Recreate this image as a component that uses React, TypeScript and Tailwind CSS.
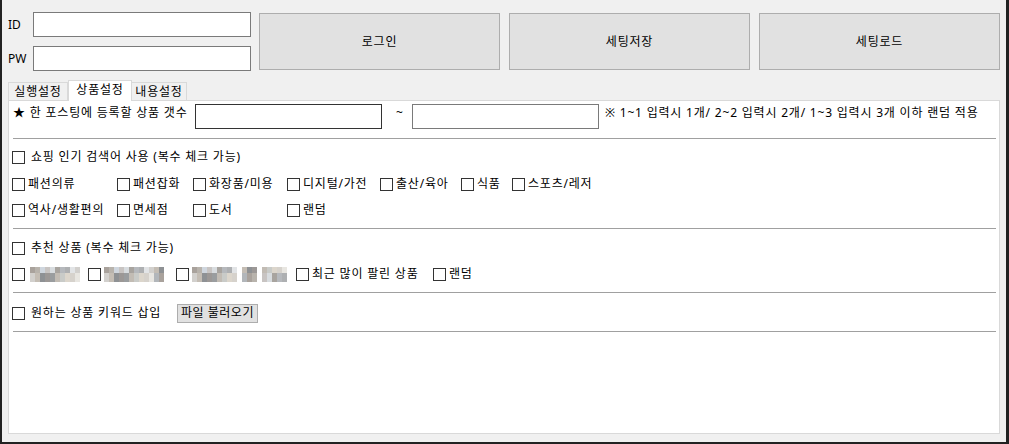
import React from 'react';

const FONT = { fontFamily: '"Noto Sans", "Noto Sans CJK KR", sans-serif' };

// checkbox + label used throughout the product settings tab
function Check({ label, width, gap = 'ml-[3px]' }: { label: React.ReactNode; width?: string; gap?: string }) {
  return (
    <div className={`flex items-center h-[20px] shrink-0 ${width ?? ''}`}>
      <div className="w-[13px] h-[13px] border border-[#333333] bg-white shrink-0" />
      <span className={`${gap} text-[12px] leading-none tracking-[0.8px] text-black whitespace-nowrap`}>{label}</span>
    </div>
  );
}

// pixelated blur of hidden product names
const mosaicShades = [
  '#a9a29c', '#c8c4c2', '#b6b9bd', '#d2d0cd', '#9c9896', '#c9cbc8', '#e8e6e1', '#b8b3ac', '#d8dcdf', '#aeb0b2',
  '#c4bdb4', '#9a9d9f', '#dcd6cc', '#b2b6ba', '#cfd6de', '#a8a49f', '#e2e4e6', '#8e9194', '#c2bcb4', '#d6d2cc',
];

function Mosaic({ cols, gaps = [] }: { cols: number; gaps?: number[] }) {
  return (
    <div className="flex flex-col">
      {[0, 1].map((r) => (
        <div key={r} className="flex">
          {Array.from({ length: cols }).map((_, i) => (
            <div
              key={i}
              className={r === 0 ? 'w-[5px] h-[6px]' : 'w-[5px] h-[9px]'}
              style={{ background: gaps.includes(i) ? 'transparent' : mosaicShades[(i * 7 + r * 3) % mosaicShades.length] }}
            />
          ))}
        </div>
      ))}
    </div>
  );
}

function Line() {
  return <div className="w-[983px] h-px bg-[#a0a0a0] ml-px" />;
}

export default function App() {
  return (
    <div
      className="w-[1009px] h-[444px] bg-[#f0f0f0] border-l-2 border-r-[3px] border-b-2 border-[#222222] overflow-hidden"
      style={FONT}
    >
      {/* login + settings buttons */}
      <div className="flex pt-[12px] pl-[6px]">
        <div className="flex flex-col gap-[9px]">
          <div className="flex items-center">
            <span className="w-[25px] text-[12px] text-black">ID</span>
            <div className="w-[218px] h-[25px] border border-[#7a7a7a] bg-white" />
          </div>
          <div className="flex items-center">
            <span className="w-[25px] text-[12px] text-black">PW</span>
            <div className="w-[218px] h-[25px] border border-[#7a7a7a] bg-white" />
          </div>
        </div>
        <div className="flex gap-[9px] ml-[8px] mt-px">
          {['로그인', '세팅저장', '세팅로드'].map((t) => (
            <button
              key={t}
              className="w-[241px] h-[57px] bg-[#e1e1e1] border border-[#adadad] text-[12px] tracking-[0.8px] text-black"
            >
              {t}
            </button>
          ))}
        </div>
      </div>

      {/* tabs */}
      <div className="flex items-end h-[21px] mt-[8px] ml-[6px] relative z-10 tracking-[0.8px]">
        <div className="h-[18px] w-[60px] border border-b-0 border-[#d9d9d9] bg-[#f0f0f0] text-[12px] leading-[17px] text-center text-black">
          실행설정
        </div>
        <div className="h-[21px] w-[64px] border border-b-0 border-[#d9d9d9] bg-white text-[12px] leading-[18px] text-center text-black -mb-px">
          상품설정
        </div>
        <div className="h-[18px] w-[55px] border border-b-0 border-l-0 border-[#d9d9d9] bg-[#f0f0f0] text-[12px] leading-[17px] text-center text-black">
          내용설정
        </div>
      </div>

      {/* tab page */}
      <div className="ml-[6px] w-[992px] h-[334px] bg-white border border-[#d9d9d9] pt-[3px] pl-[3px]">
        <div className="flex items-start h-[25px] tracking-[0.8px]">
          <span className="w-[183px] pl-[1px] pt-[3px] text-[12px] leading-none text-black whitespace-nowrap">★ 한 포스팅에 등록할 상품 갯수</span>
          <div className="w-[187px] h-[25px] border border-[#333333] bg-white" />
          <span className="w-[30px] pl-[14px] pt-[3px] text-[12px] leading-none text-black">~</span>
          <div className="w-[187px] h-[25px] border border-[#7a7a7a] bg-white" />
          <span className="ml-[6px] pt-[3px] text-[12px] leading-none text-black whitespace-nowrap">
            ※ 1~1 입력시 1개/ 2~2 입력시 2개/ 1~3 입력시 3개 이하 랜덤 적용
          </span>
        </div>

        <div className="mt-[9px]"><Line /></div>

        <div className="mt-[8px]">
          <Check label="쇼핑 인기 검색어 사용 (복수 체크 가능)" gap="ml-[6px]" />
        </div>
        <div className="flex mt-[7px]">
          <Check label="패션의류" width="w-[105px]" />
          <Check label="패션잡화" width="w-[76px]" />
          <Check label="화장품/미용" width="w-[94px]" />
          <Check label="디지털/가전" width="w-[93px]" />
          <Check label="출산/육아" width="w-[81px]" />
          <Check label="식품" width="w-[51px]" />
          <Check label="스포츠/레저" />
        </div>
        <div className="flex mt-[6px]">
          <Check label="역사/생활편의" width="w-[105px]" />
          <Check label="면세점" width="w-[76px]" />
          <Check label="도서" width="w-[94px]" />
          <Check label="랜덤" />
        </div>

        <div className="mt-[8px]"><Line /></div>

        <div className="mt-[9px]">
          <Check label="추천 상품 (복수 체크 가능)" gap="ml-[6px]" />
        </div>
        <div className="flex mt-[6px]">
          <Check label={<Mosaic cols={10} />} width="w-[76px]" gap="ml-[5px]" />
          <Check label={<Mosaic cols={12} />} width="w-[88px]" gap="ml-[3px]" />
          <Check label={<Mosaic cols={19} gaps={[9, 13]} />} width="w-[120px]" gap="ml-[3px]" />
          <Check label="최근 많이 팔린 상품" width="w-[137px]" />
          <Check label="랜덤" />
        </div>

        <div className="mt-[8px]"><Line /></div>

        <div className="flex items-center h-[20px] mt-[10px]">
          <Check label="원하는 상품 키워드 삽입" gap="ml-[6px]" width="w-[165px]" />
          <button className="w-[81px] h-[19px] bg-[#e1e1e1] border border-[#adadad] text-[12px] leading-none tracking-[0.5px] text-black">
            파일 불러오기
          </button>
        </div>

        <div className="mt-[8px]"><Line /></div>
      </div>
    </div>
  );
}
